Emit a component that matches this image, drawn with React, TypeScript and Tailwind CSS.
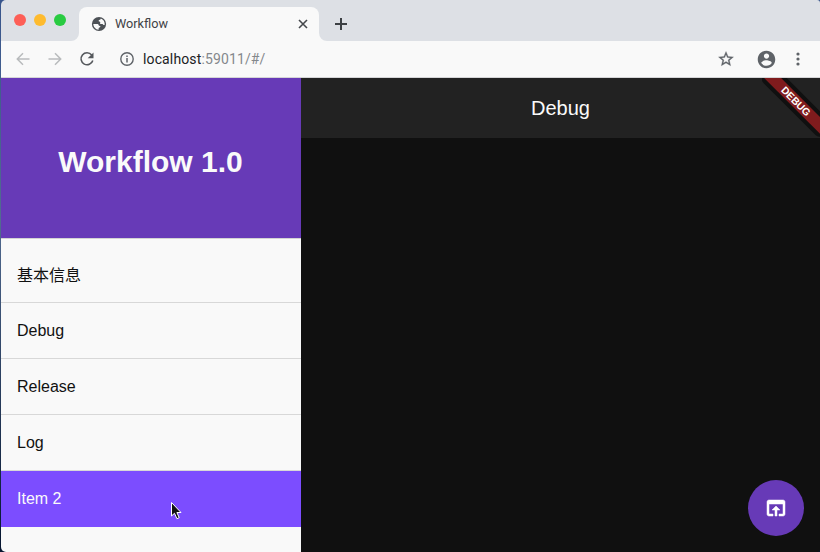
import React from "react";

const items = ["基本信息", "Debug", "Release", "Log"];

function TabStrip() {
  return (
    <div className="flex h-[41px] items-end bg-[#dde0e5]">
      <div className="flex h-[41px] w-[78px] gap-2 pl-[13px] pt-[14px]">
        <span className="size-3 rounded-full bg-[#fd5f57]" />
        <span className="size-3 rounded-full bg-[#febb2e]" />
        <span className="size-3 rounded-full bg-[#28cb41]" />
      </div>
      <div className="relative flex h-[34px] w-[240px] items-center rounded-t-lg bg-[#f9f9f9] pl-3 pr-[11px]">
        <svg className="absolute -left-2 bottom-0 size-2" viewBox="0 0 8 8">
          <path d="M8 0v8H0a8 8 0 0 0 8-8Z" fill="#f9f9f9" />
        </svg>
        <svg className="absolute -right-2 bottom-0 size-2" viewBox="0 0 8 8">
          <path d="M0 0v8h8a8 8 0 0 1-8-8Z" fill="#f9f9f9" />
        </svg>
        <svg className="size-4" viewBox="0 0 16 16">
          <circle cx="8" cy="8" r="7.1" fill="#4d5156" />
          <path
            d="M2.3 8.1h3.2c1.7 0 2 .5 2.300 1.300.3.7 1.700.2 1.700 1.200 0 1.100-1.900.7-1.900 1.800v1.400C4.600 13.600 2.300 11 2.300 8.100Z"
            fill="#f9f9f9"
          />
          <path
            d="M9.800 2.500c.2 1.300-1.900 1-2.200 2.300-.3 1 1.500.7 1.700 1.500.2.7-.9 1 .2 1.600 1 .5 1.900-.3 2.500.5.5.7 1.100.6 1.700.3.300-2.900-1.400-5.300-3.900-6.200Z"
            fill="#f9f9f9"
          />
        </svg>
        <span className="ml-2 text-[12.7px] leading-4 text-[#3f4246]">Workflow</span>
        <svg className="ml-auto size-[10px]" viewBox="0 0 10 10" stroke="#45484c" strokeWidth="1.6">
          <path d="m1 1 8 8M9 1 1 9" />
        </svg>
      </div>
      <svg className="mb-[11px] ml-[16px] size-3" viewBox="0 0 12 12" stroke="#3c4043" strokeWidth="2">
        <path d="M6 0v12M0 6h12" />
      </svg>
    </div>
  );
}

function Toolbar() {
  return (
    <div className="flex h-[37px] items-center border-b border-[#d5d5d7] bg-[#f9f9f9] px-[14px]">
      <svg className="size-4" viewBox="0 0 16 16" fill="none" stroke="#b9bbbd" strokeWidth="1.5">
        <path d="M14.500 8H2.500M8 2.300 2.300 8 8 13.700" />
      </svg>
      <svg className="ml-4 size-4" viewBox="0 0 16 16" fill="none" stroke="#b9bbbd" strokeWidth="1.5">
        <path d="M1.500 8h12M8 2.300 13.700 8 8 13.700" />
      </svg>
      <svg className="ml-4 size-4" viewBox="0 0 16 16" fill="none" stroke="#55585c" strokeWidth="1.6">
        <path d="M12.700 4A6 6 0 1 0 13.800 9.500" />
        <path d="M14.500 1.500v5.800H8.700Z" fill="#55585c" stroke="none" />
      </svg>
      <svg className="ml-6 size-4" viewBox="0 0 16 16" fill="none" stroke="#5f6368" strokeWidth="1.4">
        <circle cx="8" cy="8" r="6.2" />
        <path d="M8 7v4.500M8 4.500v1.500" strokeWidth="1.5" />
      </svg>
      <span className="ml-2 text-[14px] leading-5 tracking-[0.13px] text-[#202124]">
        localhost<span className="text-[#84888c]">:59011/#/</span>
      </span>
      <svg className="ml-auto size-[18px]" viewBox="0 0 24 24" fill="#5f6368" stroke="#5f6368" strokeWidth="0.4">
        <path d="m22 9.240-7.190-.62L12 2 9.190 8.630 2 9.240l5.460 4.730L5.820 21 12 17.270 18.180 21l-1.630-7.030L22 9.240ZM12 15.400l-3.760 2.270 1-4.280-3.320-2.880 4.380-.38L12 6.100l1.710 4.040 4.380.38-3.320 2.880 1 4.280L12 15.400Z" />
      </svg>
      <svg className="ml-[21px] size-[21px]" viewBox="0 0 24 24" fill="#5f6368">
        <path d="M12 2C6.480 2 2 6.480 2 12s4.480 10 10 10 10-4.480 10-10S17.520 2 12 2Zm0 3c1.660 0 3 1.340 3 3s-1.340 3-3 3-3-1.340-3-3 1.340-3 3-3Zm0 14.200c-2.500 0-4.710-1.280-6-3.220.03-1.990 4-3.080 6-3.080 1.990 0 5.970 1.090 6 3.080-1.290 1.940-3.500 3.220-6 3.220Z" />
      </svg>
      <svg className="ml-[13px] size-4" viewBox="0 0 16 16" fill="#5f6368">
        <circle cx="8" cy="3" r="1.6" />
        <circle cx="8" cy="8" r="1.6" />
        <circle cx="8" cy="13" r="1.6" />
      </svg>
    </div>
  );
}

function Sidebar() {
  return (
    <aside className="w-[300px] shrink-0 bg-[#f9f9f9] text-[16px] text-[#111]">
      <div className="flex h-[161px] items-center justify-center border-b border-[#d3d3d3] bg-[#673ab7] pr-px pt-[8px]">
        <h1 className="text-[30px] leading-9 font-bold text-[#fafafa]">Workflow 1.0</h1>
      </div>
      <nav className="pt-2">
        {items.map((item, i) => (
          <div
            key={item}
            className={
              "flex h-14 items-center border-b border-[#d8d8d8] px-4 " + (i === 0 ? "pt-0.5" : "")
            }
          >
            {item}
          </div>
        ))}
        <div className="flex h-14 items-center bg-[#7c4dff] px-4 text-[#fafafa]">Item 2</div>
      </nav>
    </aside>
  );
}

function DebugBanner() {
  return (
    <svg className="absolute right-0 top-0 h-[60px] w-[70px]" viewBox="0 0 70 60">
      <g transform="translate(70.7 0) rotate(45)">
        <rect x="-42" y="24" width="84" height="20" rx="5" fill="#101010" />
        <rect x="-40" y="28" width="80" height="12" fill="#7f1b1d" />
        <text
          x="-1"
          y="37.6"
          fill="#fff"
          fontSize="10.2"
          fontWeight="700"
          textAnchor="middle"
          fontFamily="Liberation Sans, sans-serif"
        >
          DEBUG
        </text>
      </g>
    </svg>
  );
}

function Workspace() {
  return (
    <main className="relative flex flex-1 flex-col bg-[#101010]">
      <header className="flex h-[60px] items-center justify-center bg-[#222222] text-[20px] text-[#fafafa]">
        Debug
      </header>
      <DebugBanner />
      <button className="mb-4 ml-auto mr-4 mt-auto flex size-14 items-center justify-center rounded-full bg-[#673ab7]">
        <svg className="size-6" viewBox="0 0 24 24" fill="#fff" stroke="#fff" strokeWidth="0.5">
          <path d="M19 4H5c-1.110 0-2 .9-2 2v12c0 1.100.89 2 2 2h4v-2H5V8h14v10h-4v2h4c1.100 0 2-.9 2-2V6c0-1.100-.89-2-2-2Zm-7 6-4 4h3v6h2v-6h3l-4-4Z" />
        </svg>
      </button>
    </main>
  );
}

export default function App() {
  return (
    <div className="relative h-[552px] w-[820px] overflow-hidden bg-linear-to-b from-[#38558c] via-[#526b91] via-40% to-[#06152f] pl-px font-['Liberation_Sans','Noto_Sans_CJK_SC',sans-serif]">
      <div className="flex h-full flex-col overflow-hidden rounded-bl-[5px] rounded-br-[3px] rounded-tl-[5px] rounded-tr-[3px]">
        <div className="font-[Roboto,sans-serif]">
          <TabStrip />
          <Toolbar />
        </div>
        <div className="flex flex-1">
          <Sidebar />
          <Workspace />
        </div>
      </div>
      <svg className="absolute left-[170px] top-[501px] h-[20px] w-[14px]" viewBox="0 0 14 20">
        <path
          d="M1.500 1.500v13.500l3-2.700 2.400 5.400 2.300-1-2.300-5.200h4.100Z"
          fill="#111"
          stroke="#fff"
          strokeLinejoin="round"
        />
      </svg>
    </div>
  );
}
